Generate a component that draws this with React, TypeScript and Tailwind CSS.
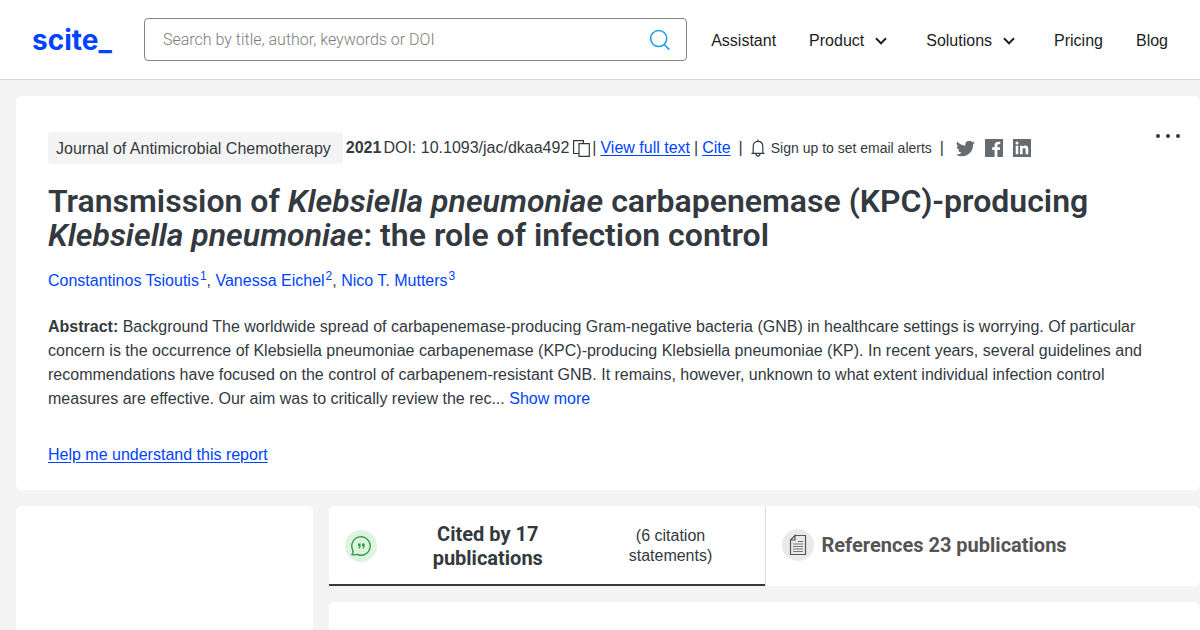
import React from "react";

const link = "text-[#0044ff]";

function ChevronDown() {
  return (
    <svg width="12" height="8" viewBox="0 0 12 8" fill="none" stroke="#1d1d1f" strokeWidth="2" aria-hidden="true">
      <path d="M1 1.2 6 6.4 11 1.2" />
    </svg>
  );
}

function Header() {
  return (
    <header className="flex h-20 items-center border-b border-[#d8d8d8] bg-white px-8">
      <a href="#home" className="w-20 shrink-0 font-['Inter',sans-serif] text-[28px] font-bold leading-8 text-[#0044ff]">
        scite_
      </a>
      <form className="ml-8 flex h-[43px] min-w-0 flex-1 items-center rounded-sm border border-[#858585] bg-white pl-[18px] pr-4">
        <input
          type="search"
          aria-label="Search"
          placeholder="Search by title, author, keywords or DOI"
          className="min-w-0 flex-1 bg-transparent font-['Roboto',sans-serif] text-base font-light text-gray-800 outline-none placeholder:text-[#7c7c7c]"
        />
        <button type="button" aria-label="Submit search">
          <svg width="20" height="22" viewBox="0 0 20 22" fill="none" stroke="#1a9cf5" strokeWidth="1.500" aria-hidden="true">
            <circle cx="8.700" cy="9.500" r="8" />
            <path d="M14.200 15.500 19.300 20.600" />
          </svg>
        </button>
      </form>
      <nav className="ml-6 flex shrink-0 items-center gap-[33px] pt-0.5 text-base text-[#1d1d1f]">
        <a href="#assistant">Assistant</a>
        <button type="button" className="flex items-center gap-[11px] pr-1.5">Product <ChevronDown /></button>
        <button type="button" className="flex items-center gap-[11px] pr-1.5">Solutions <ChevronDown /></button>
        <a href="#pricing">Pricing</a>
        <a href="#blog">Blog</a>
      </nav>
    </header>
  );
}

function Meta() {
  return (
    <div className="flex h-8 items-center whitespace-nowrap text-base">
      <span className="rounded bg-[#f4f4f4] pb-[3px] pl-2 pr-3 pt-[5px]">Journal of Antimicrobial Chemotherapy</span>
      <div className="ml-[3px] flex items-center">
        <b>2021</b>
        <span className="ml-0.5">DOI: 10.1093/jac/dkaa492</span>
        <button type="button" aria-label="Copy DOI" className="ml-1">
          <svg width="17" height="17" viewBox="0 0 17 17" fill="none" stroke="#333940" strokeWidth="1.200" aria-hidden="true">
            <path d="M5.500 13.500H.6V.6H10.400V3.500M6 3.600H16.300V16.300H6Z" />
          </svg>
        </button>
        <span className="ml-0.5">|</span>
        <a href="#text" className={`${link} ml-1 underline underline-offset-2`}>View full text</a>
        <span className="ml-1">|</span>
        <a href="#cite" className={`${link} ml-1 underline underline-offset-2`}>Cite</a>
        <span className="ml-2">|</span>
        <button type="button" className="ml-2 flex items-center gap-1.5 text-sm">
          <svg width="14" height="18" viewBox="0 0 14 18" fill="none" stroke="#333940" strokeWidth="1.200" aria-hidden="true">
            <path d="M.5 14.400H13.500M2.200 14.200V7.500C2.200 4.300 4 2.300 7 2.300S11.800 4.300 11.800 7.500V14.200M7 2.300V.5M5 14.800C5.200 17.800 8.800 17.800 9 14.800" />
          </svg>
          Sign up to set email alerts
        </button>
        <span className="ml-2">|</span>
      </div>
      <div className="ml-3 flex items-center gap-2.5 text-[#666b70]">
        <a href="#twitter" aria-label="Twitter">
          <svg width="19" height="19" viewBox="0 0 24 24" fill="currentColor" aria-hidden="true">
            <path d="M24 4.600a10 10 0 0 1-2.800.8 5 5 0 0 0 2.200-2.700c-1 .6-2 1-3.100 1.200a4.900 4.900 0 0 0-8.400 4.500A14 14 0 0 1 1.700 3.200a4.900 4.900 0 0 0 1.500 6.500 4.900 4.900 0 0 1-2.200-.6v.1a4.900 4.900 0 0 0 3.900 4.800 5 5 0 0 1-2.200.1 4.900 4.900 0 0 0 4.600 3.400A9.900 9.900 0 0 1 0 19.500 14 14 0 0 0 21.500 7.100 10 10 0 0 0 24 4.600z" />
          </svg>
        </a>
        <a href="#facebook" aria-label="Facebook">
          <svg width="18" height="18" viewBox="0 0 18 18" fill="currentColor" aria-hidden="true">
            <path d="M0 0H18V18H12.400V11H14.800L15.200 8.300H12.400V6.600C12.400 5.800 12.700 5.200 13.800 5.200H15.300V2.800C15 2.800 14 2.700 13 2.700 11 2.700 9.600 3.900 9.600 6.200V8.300H7.200V11H9.600V18H0Z" />
          </svg>
        </a>
        <a href="#linkedin" aria-label="LinkedIn">
          <svg width="18" height="18" viewBox="0 0 18 18" fill="currentColor" fillRule="evenodd" aria-hidden="true">
            <path d="M0 0H18V18H0ZM2.700 6.800V15.300H5.300V6.800ZM4 2.500A1.500 1.500 0 1 0 4 5.500 1.500 1.500 0 0 0 4 2.500ZM7 6.800V15.300H9.600V11C9.600 9.800 10 8.900 11.200 8.900 12.300 8.900 12.600 9.800 12.600 11V15.300H15.300V10.500C15.300 8.100 14.600 6.600 12.100 6.600 10.800 6.600 10 7.200 9.600 7.900V6.800Z" />
          </svg>
        </a>
      </div>
    </div>
  );
}

function Author({ name, mark }: { name: string; mark: number }) {
  return (
    <a href={`#author-${mark}`} className={link}>
      {name}<sup className="ml-px text-xs">{mark}</sup>
    </a>
  );
}

function Paper() {
  return (
    <article className="relative rounded-md bg-white px-8 pb-6 pt-9">
      <Meta />
      <button type="button" aria-label="More options" className="absolute right-5 top-9">
        <svg width="24" height="8" viewBox="0 0 24 8" fill="#333940" aria-hidden="true">
          <circle cx="2" cy="4" r="2" />
          <circle cx="12" cy="4" r="2" />
          <circle cx="22" cy="4" r="2" />
        </svg>
      </button>
      <h1 className="mt-5 font-['Roboto',sans-serif] text-[32px] font-semibold leading-[34px]">
        Transmission of <i>Klebsiella pneumoniae</i> carbapenemase (KPC)-producing{" "}
        <i>Klebsiella pneumoniae</i>: the role of infection control
      </h1>
      <p className="mt-[17px] text-base leading-6">
        <Author name="Constantinos Tsioutis" mark={1} />, <Author name="Vanessa Eichel" mark={2} />,{" "}
        <Author name="Nico T. Mutters" mark={3} />
      </p>
      <p className="mt-[22px] text-base leading-6">
        <b>Abstract:</b> Background The worldwide spread of carbapenemase-producing Gram-negative bacteria (GNB) in healthcare settings is worrying. Of particular
        <br />
        concern is the occurrence of Klebsiella pneumoniae carbapenemase (KPC)-producing Klebsiella pneumoniae (KP). In recent years, several guidelines and
        <br />
        recommendations have focused on the control of carbapenem-resistant GNB. It remains, however, unknown to what extent individual infection control
        <br />
        measures are effective. Our aim was to critically review the rec...{" "}
        <button type="button" className={link}>Show more</button>
      </p>
      <p className="-mb-px mt-8 text-base leading-6">
        <a href="#help" className={`${link} underline underline-offset-2`}>Help me understand this report</a>
      </p>
    </article>
  );
}

function Tabs() {
  return (
    <div role="tablist" className="flex h-20 rounded-md bg-white">
      <button type="button" role="tab" aria-selected="true" className="flex w-1/2 items-center border-b-2 border-[#333940] px-4 pt-0.5">
        <svg width="32" height="32" viewBox="0 0 32 32" fill="none" aria-hidden="true" className="shrink-0">
          <circle cx="16" cy="16" r="16" fill="#def4e0" />
          <path d="M7 24.500C8.200 23.500 8.300 22 7.700 20A9.200 9.200 0 1 1 12.200 24.400C10.500 24.900 8.500 25 7 24.500Z" stroke="#2f9a44" strokeWidth="1.400" />
          <path d="M13 13.500h2.600v2.400c0 1.600-.7 2.500-2.100 2.900v-1c.5-.3.800-.8.800-1.500H13ZM17 13.500h2.600v2.400c0 1.600-.7 2.500-2.100 2.900v-1c.5-.3.800-.8.800-1.500H17Z" fill="#2f9a44" />
        </svg>
        <span className="ml-1.5 flex-1 font-['Roboto',sans-serif] text-xl font-bold leading-6">Cited by 17<br />publications</span>
        <span className="w-[156px] text-base leading-5">(6 citation<br />statements)</span>
      </button>
      <button type="button" role="tab" aria-selected="false" className="flex w-1/2 items-center gap-2 border-l border-[#dedede] px-4 pb-0.5">
        <svg width="32" height="32" viewBox="0 0 32 32" fill="none" aria-hidden="true" className="shrink-0">
          <circle cx="16" cy="16" r="16" fill="#e9e9e9" />
          <path d="M13 6.500H23.500V25.500H8.500V11L13 6.500V11H8.500" stroke="#555" strokeWidth="1.200" />
          <path d="M16 12.500H21M11 15H21M11 17.500H21M11 20H21M11 22.500H21" stroke="#777" />
        </svg>
        <span className="font-['Roboto',sans-serif] text-xl font-bold leading-6 text-[#555]">References 23 publications</span>
      </button>
    </div>
  );
}

export default function App() {
  return (
    <div className="flex h-screen flex-col overflow-hidden bg-[#f4f4f4] font-['Liberation_Sans',Arial,sans-serif] text-[#333940]">
      <Header />
      <main className="flex min-h-0 flex-1 flex-col gap-4 pl-4 pt-4">
        <Paper />
        <div className="flex min-h-0 flex-1 gap-4">
          <aside className="w-[297px] shrink-0 rounded-t-md bg-white" />
          <section className="flex min-w-0 flex-1 flex-col gap-4">
            <Tabs />
            <div className="flex-1 rounded-t-md bg-white" />
          </section>
        </div>
      </main>
    </div>
  );
}
